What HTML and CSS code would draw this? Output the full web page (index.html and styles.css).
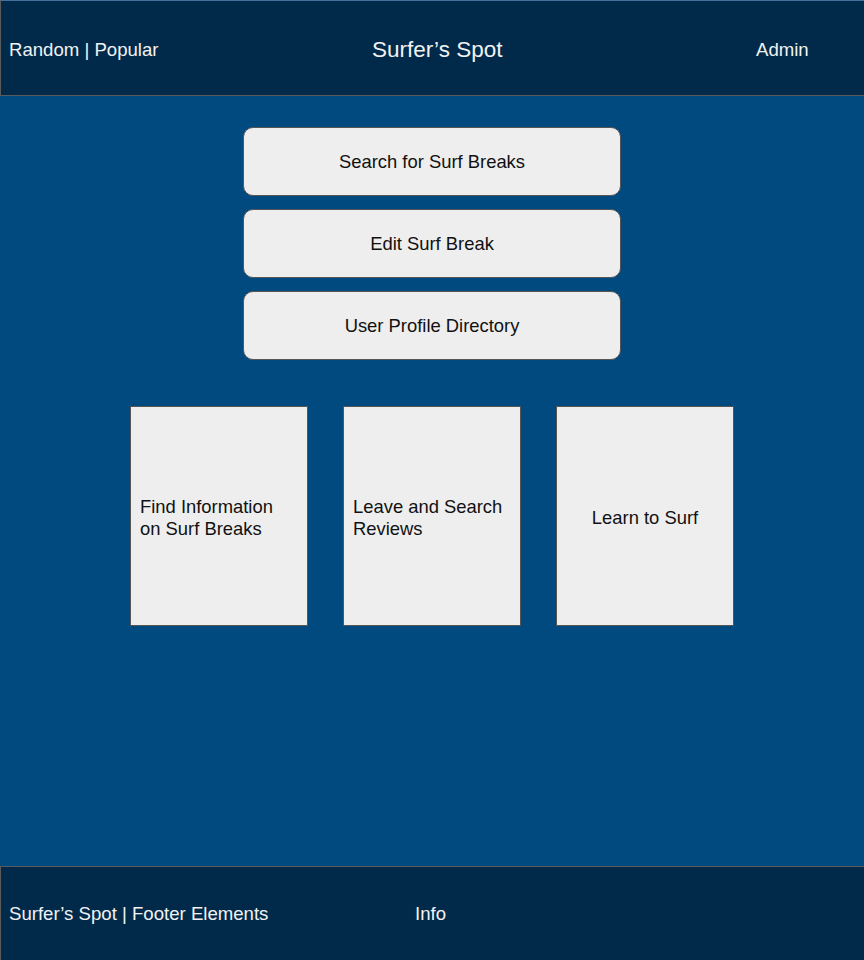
FILE: index.html
```html
<!DOCTYPE html>
<html lang="en">
<head>
<meta charset="utf-8">
<title>Surfer’s Spot</title>
<link rel="stylesheet" href="styles.css">
</head>
<body>
<div class="page">
  <header class="topbar">
    <div class="nav-left">Random | Popular</div>
    <div class="brand">Surfer’s Spot</div>
    <div class="nav-right">Admin</div>
  </header>
  <main class="content">
    <div class="actions">
      <div class="action-btn">Search for Surf Breaks</div>
      <div class="action-btn">Edit Surf Break</div>
      <div class="action-btn">User Profile Directory</div>
    </div>
    <div class="cards">
      <div class="card card-left">Find Information on Surf Breaks</div>
      <div class="card card-left">Leave and Search Reviews</div>
      <div class="card card-center">Learn to Surf</div>
    </div>
  </main>
  <footer class="bottombar">
    <div class="foot-left">Surfer’s Spot | Footer Elements</div>
    <div class="foot-info">Info</div>
  </footer>
</div>
</body>
</html>
```

FILE: styles.css
```css
* { box-sizing: border-box; }
html, body { margin: 0; padding: 0; }
body {
  font-family: "Liberation Sans", Arial, sans-serif;
  background: #014a7f;
}
.page {
  width: 864px;
  height: 960px;
  display: flex;
  flex-direction: column;
}
.topbar {
  height: 96px;
  background: #012a4a;
  border-top: 1px solid #45709a;
  border-left: 1px solid #5a5a5a;
  border-bottom: 1px solid #5a5a5a;
  display: grid;
  grid-template-columns: 363px 384px 1fr;
  align-items: center;
  padding: 4px 0 0 8px;
  color: #f2f2f2;
}
.nav-left, .nav-right { font-size: 18.6px; }
.brand { font-size: 22.5px; }
.content {
  flex: 1;
  padding-top: 31px;
  display: flex;
  flex-direction: column;
  align-items: center;
}
.actions {
  display: flex;
  flex-direction: column;
  gap: 13px;
}
.action-btn {
  width: 378px;
  height: 69px;
  background: #eeeeee;
  border: 1px solid #555;
  border-radius: 10px;
  display: flex;
  align-items: center;
  justify-content: center;
  font-size: 18.4px;
  color: #111;
}
.cards {
  margin-top: 46px;
  display: flex;
  gap: 35px;
}
.card {
  width: 178px;
  height: 220px;
  background: #eeeeee;
  border: 1px solid #555;
  display: flex;
  align-items: center;
  font-size: 18.4px;
  line-height: 22px;
  color: #111;
  padding: 3px 12px 0 9px;
}
.card-center { justify-content: center; text-align: center; padding: 3px 0 0 0; }
.bottombar {
  height: 94px;
  background: #012a4a;
  border-top: 1px solid #5a5a5a;
  border-left: 1px solid #5a5a5a;
  display: grid;
  grid-template-columns: 406px 1fr;
  align-items: center;
  padding-left: 8px;
  color: #f2f2f2;
  font-size: 18.6px;
}
```
